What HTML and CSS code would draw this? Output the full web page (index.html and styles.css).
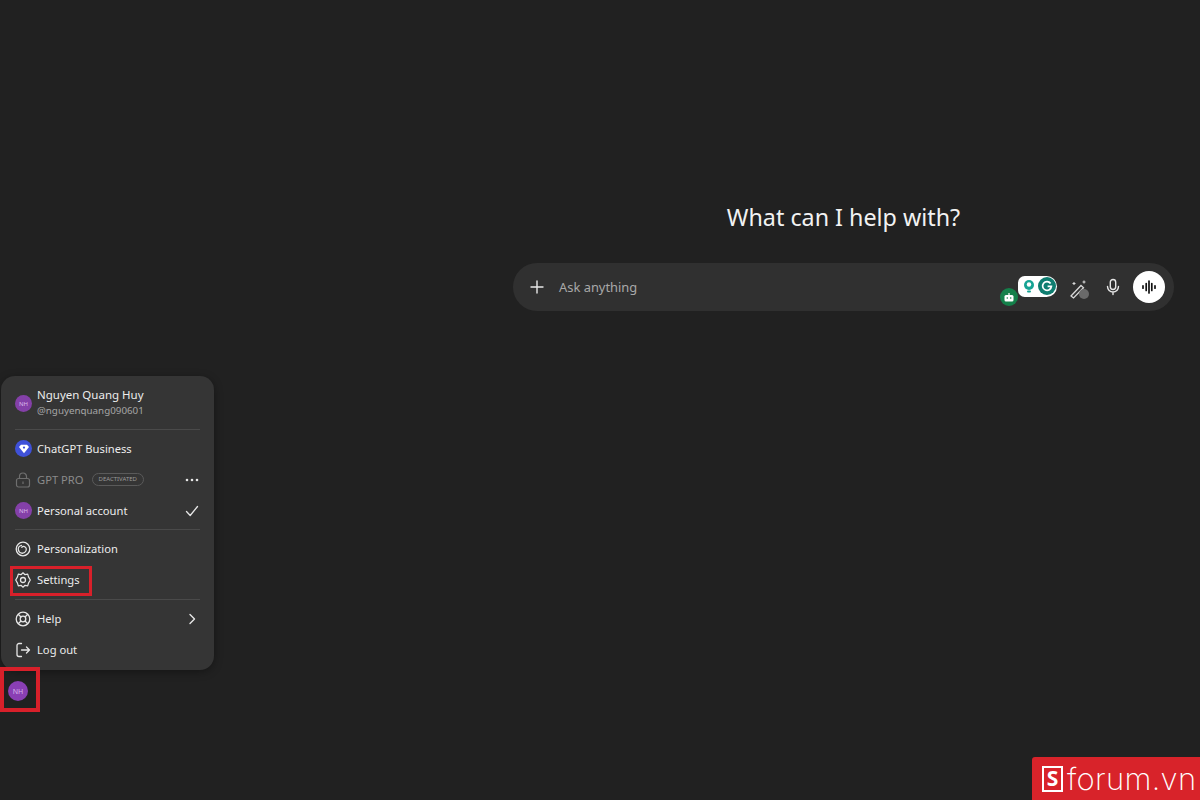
FILE: index.html
```html
<!DOCTYPE html>
<html lang="en">
<head>
    <meta charset="UTF-8">
    <meta name="viewport" content="width=device-width, initial-scale=1.0">
    <title>ChatGPT</title>
    <link rel="stylesheet" href="styles.css">
</head>
<body>
    <div class="page">
        <aside class="sidebar">
            <div class="avatar avatar-big">NH</div>
        </aside>

        <main class="main">
            <h1>What can I help with?</h1>
            <div class="composer">
                <svg class="plus" width="16" height="16" viewBox="0 0 16 16"><path d="M8 2v12M2 8h12" stroke="#e8e8e8" stroke-width="1.4" stroke-linecap="round"/></svg>
                <span class="placeholder">Ask anything</span>
                <div class="tools">
                    <div class="ext">
                        <span class="robot">
                            <svg width="12" height="12" viewBox="0 0 12 12"><rect x="1.5" y="4" width="9" height="6.5" rx="1.5" fill="#fff"/><path d="M6 4V2" stroke="#fff" stroke-width="1.2"/><circle cx="4.3" cy="7" r=".8" fill="#14804a"/><circle cx="7.7" cy="7" r=".8" fill="#14804a"/></svg>
                        </span>
                        <span class="pill">
                            <svg width="16" height="16" viewBox="0 0 16 16"><circle cx="8" cy="7" r="5" fill="#16a394"/><circle cx="8" cy="6.5" r="2.2" fill="#fff"/><rect x="6" y="12.5" width="4" height="2" rx="1" fill="#16a394"/></svg>
                            <svg width="18" height="18" viewBox="0 0 18 18"><circle cx="9" cy="9" r="9" fill="#0f7d70"/><path d="M12.6 6.4A4.4 4.4 0 1 0 13.4 9.400H9.600" fill="none" stroke="#fff" stroke-width="1.700"/></svg>
                        </span>
                    </div>
                    <svg class="wand" width="22" height="22" viewBox="0 0 22 22"><path d="M3 18 13 7.500l2.500 2.300L5.500 20z" fill="none" stroke="#d8d8d8" stroke-width="1.300"/><path d="M6 4v3M4.500 5.500h3M16 2.500v3M14.500 4h3" stroke="#d8d8d8" stroke-width="1.100"/><circle cx="16" cy="16" r="5" fill="#6a6a6a"/></svg>
                    <svg class="mic" width="18" height="18" viewBox="0 0 18 18"><rect x="6.300" y="1.500" width="5.400" height="10" rx="2.700" fill="none" stroke="#e6e6e6" stroke-width="1.400"/><path d="M3.500 8.500a5.500 5.500 0 0 0 11 0M9 14v2.500" fill="none" stroke="#e6e6e6" stroke-width="1.400" stroke-linecap="round"/></svg>
                    <span class="voice">
                        <svg width="16" height="16" viewBox="0 0 16 16"><path d="M2 6.800v2.400M5.200 4.500v7M8 2v12M10.800 4.500v7M14 6.800v2.400" stroke="#111" stroke-width="1.700" stroke-linecap="round"/></svg>
                    </span>
                </div>
            </div>
        </main>

        <div class="menu">
            <div class="row row-user">
                <div class="avatar">NH</div>
                <div class="user-text">
                    <div class="user-name">Nguyen Quang Huy</div>
                    <div class="user-handle">@nguyenquang090601</div>
                </div>
            </div>
            <div class="sep sep-first"></div>
            <div class="row">
                <span class="business">
                    <svg width="12" height="12" viewBox="0 0 12 12"><path d="M1 4 3 1.800h6L11 4 6 10.200z" fill="#fff"/><circle cx="6" cy="4.600" r="1.100" fill="#3f51d8"/></svg>
                </span>
                <span>ChatGPT Business</span>
            </div>
            <div class="row row-off">
                <svg class="icon" width="18" height="18" viewBox="0 0 18 18"><rect x="2.500" y="7.500" width="13" height="8.500" rx="2" fill="none" stroke="#6f6f6f" stroke-width="1.200"/><path d="M5.500 7.500V5.500a3.500 3.500 0 0 1 7 0v2" fill="none" stroke="#6f6f6f" stroke-width="1.200"/><path d="M9 10.500v2.500" stroke="#6f6f6f" stroke-width="1.200"/></svg>
                <span>GPT PRO</span>
                <span class="tag">DEACTIVATED</span>
                <svg class="end" width="14" height="14" viewBox="0 0 14 14"><circle cx="2" cy="7" r="1.300" fill="#e6e6e6"/><circle cx="7" cy="7" r="1.300" fill="#e6e6e6"/><circle cx="12" cy="7" r="1.300" fill="#e6e6e6"/></svg>
            </div>
            <div class="row">
                <div class="avatar">NH</div>
                <span>Personal account</span>
                <svg class="end" width="14" height="14" viewBox="0 0 14 14"><path d="M1.500 7.500 5.200 11.500 12.500 2.500" fill="none" stroke="#e6e6e6" stroke-width="1.300" stroke-linecap="round" stroke-linejoin="round"/></svg>
            </div>
            <div class="sep"></div>
            <div class="row">
                <svg class="icon" width="18" height="18" viewBox="0 0 18 18"><circle cx="9" cy="9" r="6.800" fill="none" stroke="#e6e6e6" stroke-width="1.300"/><path d="M7.500 5.300a4 4 0 1 0 4.700 3.200A2.600 2.600 0 0 0 7.800 7.200" fill="none" stroke="#e6e6e6" stroke-width="1.300" stroke-linecap="round"/></svg>
                <span>Personalization</span>
            </div>
            <div class="row">
                <svg class="icon" width="18" height="18" viewBox="0 0 18 18"><path d="M9 1.800 11 3.700 13.700 3.200 14.500 5.900 16.300 9 14.500 12.100 13.700 14.800 11 14.300 9 16.200 7 14.300 4.300 14.800 3.500 12.100 1.700 9 3.500 5.900 4.300 3.200 7 3.700z" fill="none" stroke="#e6e6e6" stroke-width="1.200" stroke-linejoin="round"/><circle cx="9" cy="9" r="2.500" fill="none" stroke="#e6e6e6" stroke-width="1.300"/></svg>
                <span>Settings</span>
            </div>
            <div class="sep sep-last"></div>
            <div class="row">
                <svg class="icon" width="18" height="18" viewBox="0 0 18 18"><circle cx="9" cy="9" r="6.800" fill="none" stroke="#e6e6e6" stroke-width="1.300"/><circle cx="9" cy="9" r="2.800" fill="none" stroke="#e6e6e6" stroke-width="1.300"/><path d="M4.200 4.200 7 7M13.800 4.200 11 7M4.200 13.800 7 11M13.800 13.800 11 11" stroke="#e6e6e6" stroke-width="1.300"/></svg>
                <span>Help</span>
                <svg class="end" width="14" height="14" viewBox="0 0 14 14"><path d="M5 2.500 9.500 7 5 11.500" fill="none" stroke="#e6e6e6" stroke-width="1.400" stroke-linecap="round" stroke-linejoin="round"/></svg>
            </div>
            <div class="row">
                <svg class="icon" width="18" height="18" viewBox="0 0 18 18"><path d="M7.500 2.500H5a2 2 0 0 0-2 2v9a2 2 0 0 0 2 2h2.500" fill="none" stroke="#e6e6e6" stroke-width="1.300" stroke-linecap="round"/><path d="M7.500 9h8M12.500 6l3 3-3 3" fill="none" stroke="#e6e6e6" stroke-width="1.300" stroke-linecap="round" stroke-linejoin="round"/></svg>
                <span>Log out</span>
            </div>
        </div>

        <div class="mark mark-settings"></div>
        <div class="mark mark-avatar"></div>

        <div class="badge">
            <span class="badge-logo">S</span>
            <span class="badge-text">forum.vn</span>
        </div>
    </div>
</body>
</html>
```

FILE: styles.css
```css
* { box-sizing: border-box; }
html, body { margin: 0; height: 100%; }
body { background: #212121; color: #ececec; font-family: "Noto Sans", "Open Sans", sans-serif; overflow: hidden; }

.page { position: relative; display: flex; width: 1200px; height: 800px; }

.sidebar { width: 36px; flex: none; display: flex; flex-direction: column; align-items: flex-start; justify-content: flex-end; padding: 0 0 100px 8px; }
.sidebar .avatar { transform: translateY(1px); }

.main { flex: 1; padding: 202px 26px 0 477px; }
h1 { margin: 0 0 30px; font-size: 23.300px; line-height: 31px; font-weight: 400; text-align: center; color: #f2f2f2; }

.composer { display: flex; align-items: center; height: 48px; padding: 0 9px 0 16px; border-radius: 24px; background: #303030; }
.plus { margin-right: 14px; }
.placeholder { font-size: 12.900px; color: #a8a8a8; }
.tools { display: flex; align-items: center; margin-left: auto; }

.ext { position: relative; width: 39px; height: 21px; margin-top: -2px; margin-right: 11px; }
.pill { display: flex; align-items: center; justify-content: space-between; height: 21px; padding: 0 1px 0 3px; border-radius: 7px 11px 11px 7px; background: #fff; }
.robot { position: absolute; left: -18px; top: 12px; width: 18px; height: 18px; display: flex; align-items: center; justify-content: center; border-radius: 50%; background: #14804a; }

.wand { margin: 3px 14px 0 0; }
.mic { margin-right: 11px; }
.voice { width: 32px; height: 32px; display: flex; align-items: center; justify-content: center; border-radius: 50%; background: #fff; }

.menu { position: absolute; left: 1px; top: 376px; width: 213px; height: 294px; padding: 9px 14px 5px; border-radius: 14px; background: #353535; box-shadow: 0 2px 8px rgba(0, 0, 0, .35); font-size: 11.200px; }
.row { display: flex; align-items: center; height: 31px; color: #ececec; }
.row-user { height: 37px; }
.row-off { color: #8a8a8a; }
.sep { height: 1px; margin: 3px 0; background: #4a4a4a; }
.sep-first { margin-top: 7px; }
.sep-last { margin-top: 4px; }

.icon { flex: none; width: 18px; margin-right: 5px; margin-left: -1px; }
.end { margin-left: auto; margin-right: 1px; }

.avatar { flex: none; width: 17px; height: 17px; margin-right: 5px; display: flex; align-items: center; justify-content: center; border-radius: 50%; background: #8440a8; color: #d9b6ea; font-size: 6px; }
.avatar-big { width: 20px; height: 20px; margin: 0; background: #8a3fb4; font-size: 7px; }

.business { flex: none; width: 17px; height: 17px; margin-right: 5px; display: flex; align-items: center; justify-content: center; border-radius: 50%; background: #3f51d8; }

.user-name { font-size: 11.500px; line-height: 16px; margin-top: -2px; }
.user-handle { font-size: 9.800px; line-height: 15px; color: #a5a5a5; }

.tag { margin-left: 8px; padding: 0 6px; border: 1px solid #5a5a5a; border-radius: 7px; font-size: 6px; line-height: 11px; color: #9a9a9a; }

.mark { position: absolute; border: 3px solid #d8202a; }
.mark-settings { left: 10px; top: 566px; width: 82px; height: 30px; }
.mark-avatar { left: 0; top: 667px; width: 40px; height: 45px; border-width: 4px; }

.badge { position: absolute; right: 0; bottom: 0; display: flex; align-items: center; width: 168px; height: 43px; padding-left: 10px; background: #d8232a; color: #fff; border-radius: 3px 0 0 0; }
.badge-logo { width: 21px; height: 26px; margin-right: 4px; display: flex; align-items: center; justify-content: center; border: 2px solid #fff; font-size: 21px; line-height: 1; font-weight: 700; }
.badge-text { font-size: 31px; line-height: 1; font-family: "Inter", "Noto Sans", sans-serif; font-weight: 200; letter-spacing: .3px; }
```
